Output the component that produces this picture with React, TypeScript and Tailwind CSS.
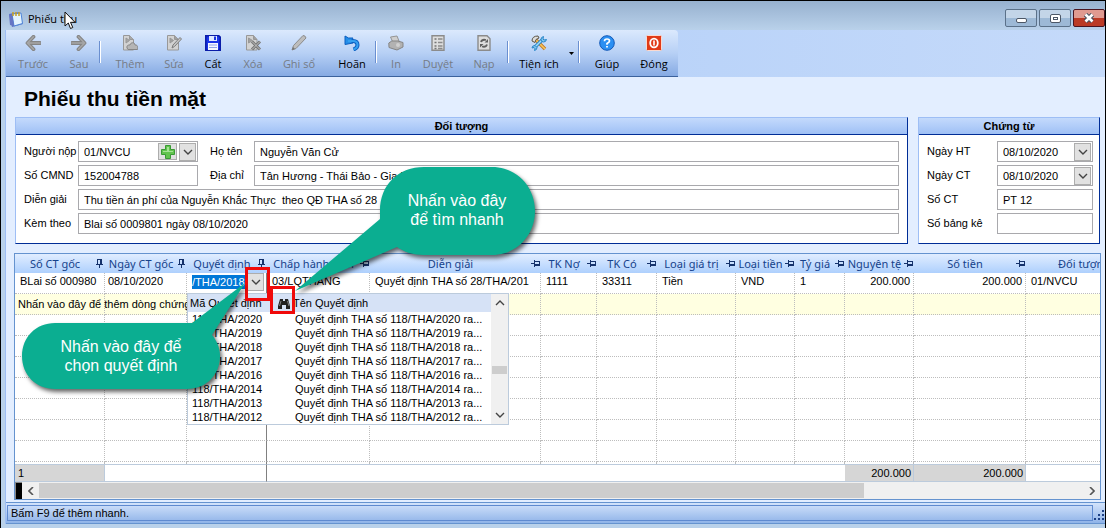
import type { ReactNode } from 'react'

const GRAY = '#858585'

function Icon({ children }: { children: ReactNode }) {
  return (
    <svg viewBox="0 0 16 16" className="h-4 w-4" aria-hidden="true">
      {children}
    </svg>
  )
}

const icons = {
  prev: (
    <Icon>
      <path d="M8.500 1.800 2.500 8l6 6.200M3 8h12" fill="none" stroke={GRAY} strokeWidth="3.800" strokeLinecap="round" strokeLinejoin="round" />
      <path d="M8.500 1.800 2.500 8l6 6.200M3 8h12" fill="none" stroke="#a6a6a6" strokeWidth="1.600" strokeLinecap="round" />
    </Icon>
  ),
  next: (
    <Icon>
      <path d="m7.500 1.800 6 6.200-6 6.200M13 8H1" fill="none" stroke={GRAY} strokeWidth="3.800" strokeLinecap="round" strokeLinejoin="round" />
      <path d="m7.500 1.800 6 6.200-6 6.200M13 8H1" fill="none" stroke="#a6a6a6" strokeWidth="1.600" strokeLinecap="round" />
    </Icon>
  ),
  add: (
    <Icon>
      <path d="M1.500 .5h6l4 4v10.500h-10z" fill="#d2d2d2" stroke="#989898" />
      <path d="M4 3v5l3.500-2.500zM7.500 .5v4h4" fill="#a8a8a8" stroke="#989898" />
      <path d="M5 13c-.5-3 1.500-3 3-3 .5-3 5-3 5 0 2.500 0 3 1 2.500 4.500H6z" fill="#b5b5b5" stroke="#858585" />
    </Icon>
  ),
  edit: (
    <Icon>
      <path d="M1.500 .5h7l4 4v10.500h-11z" fill="#d2d2d2" stroke="#989898" />
      <path d="M4 3v5l3.500-2.500zM8.500 .5v4h4" fill="#a0a0a0" stroke="#989898" />
      <path d="M6 13 7 10l7-7.500 1.500 1.500-7 7.500z" fill="#c6c6c6" stroke="#7c7c7c" />
    </Icon>
  ),
  save: (
    <Icon>
      <path d="M.8 .8h13l1.400 1.400v13H.8z" fill="#1a35e8" stroke="#0a1ca8" strokeWidth="1.600" />
      <path d="M4 1h8v5H4z" fill="#dfe9ff" />
      <path d="M9 1.500h2v3.500H9z" fill="#1a35e0" />
      <path d="M3 8h10v7H3z" fill="#f5f8ff" />
      <path d="M4 10h8M4 12.500h8" stroke="#90a4e8" />
    </Icon>
  ),
  remove: (
    <Icon>
      <path d="M1.500 .5h7l3.500 4v10.500H1.500z" fill="#d2d2d2" stroke="#989898" />
      <path d="M3.500 3v5l4-2.500zM8.500 .5v4h3.500" fill="#a0a0a0" stroke="#989898" />
      <path d="m7 6.500 8 8m0-8-8 8" stroke="#757575" strokeWidth="3" />
      <path d="m7 6.500 8 8m0-8-8 8" stroke="#c3c3c3" strokeWidth="1" />
    </Icon>
  ),
  post: (
    <Icon>
      <path d="m1 15 1.500-4.500 9.500-10q2.500 0 3 2.500l-10 10.500z" fill="#bdbdbd" stroke="#8b8b8b" />
      <path d="m1 15 1-3 2 2z" fill="#757575" />
    </Icon>
  ),
  undo: (
    <Icon>
      <path d="M5 6h4q4.500 0 4.500 4 0 3-4 4.500" fill="none" stroke="#0c5fc0" strokeWidth="4" />
      <path d="M1 1v8.500l8-1.500-2-1.500 2-3.500-4.500 0z" fill="#258ee8" stroke="#0c5fc0" />
      <path d="M4 6h5q4.500 0 4.500 4 0 3-4 4.500" fill="none" stroke="#35a0f0" strokeWidth="2" />
    </Icon>
  ),
  print: (
    <Icon>
      <path d="m2.500 2 6.500-1 2 5-6 1.500z" fill="#cecece" stroke="#959595" />
      <path d="m.8 8 3-2 6 0 5.200 1.500v4.500l-6 3-8-2.500z" fill="#b2b2b2" stroke="#858585" />
      <circle cx="10" cy="10" r="2" fill="#d0d0d0" />
    </Icon>
  ),
  approve: (
    <Icon>
      <path d="M2 .7h12v14.600H2z" fill="#dedede" stroke="#8b8b8b" strokeWidth="1.400" />
      <path d="M4.500 4h2m-2 3.500h2m-2 3.500h2m-2 2.500h2" stroke="#757575" strokeWidth="1.500" />
      <path d="M8 4h4.500M8 7.500h4.500M8 11h4.500M8 13.500h4.500" stroke="#8b8b8b" strokeWidth="1.300" />
    </Icon>
  ),
  reload: (
    <Icon>
      <path d="M2 .7h9l3 3v11.600H2z" fill="#dedede" stroke="#8b8b8b" strokeWidth="1.400" />
      <path d="M5 7q1-3 5-2M11 9.500q-1 3-5 2" fill="none" stroke="#606060" strokeWidth="1.800" />
      <path d="M8.500 7.500H12V4zM7.500 9H4v3.500z" fill="#606060" />
    </Icon>
  ),
  tools: (
    <Icon>
      <path d="m5 5 9 9" stroke="#c47a20" strokeWidth="3.400" />
      <path d="m5 5 9 9" stroke="#f8c860" strokeWidth="1.600" />
      <path d="M1 6q0-5 6-5l1 2-3 1.500-1 3z" fill="#ddd" stroke="#5c5548" />
      <path d="m3 13 8-8" stroke="#2b86c8" strokeWidth="3.400" />
      <path d="m3 13 8-8" stroke="#a6defa" strokeWidth="1.400" />
      <path d="M12.500 1.500Q10 2 10 4.500t2.500 2.500 3-2.500L13 5l-1-1z" fill="#7fc8f0" stroke="#2b86c8" />
      <path d="M4 10.500Q1 10.500 1 13l2-.5 1 1-.5 2q2.500-.5 2.500-3z" fill="#7fc8f0" stroke="#2b86c8" />
    </Icon>
  ),
  help: (
    <Icon>
      <circle cx="8" cy="8" r="7.300" fill="#2b8ff2" stroke="#1359b8" />
      <path d="M5.500 6.200Q5.500 4 8 4t2.500 2Q10.500 7.200 8 8.500v1.200" fill="none" stroke="#fff" strokeWidth="1.700" />
      <path d="M7.100 11h1.800v1.600H7.100z" fill="#fff" />
    </Icon>
  ),
  close: (
    <Icon>
      <rect x=".5" y=".5" width="15" height="15" rx="1" fill="#e03a18" stroke="#fbd9cf" />
      <ellipse cx="8" cy="8" rx="3.800" ry="4.300" fill="none" stroke="#fff" strokeWidth="1.800" />
      <path d="M8 5.500v5" stroke="#fff" strokeWidth="1.600" />
    </Icon>
  ),
}

type Tool = { label: string; icon: ReactNode; width: string; disabled?: boolean }

const groups: Tool[][] = [
  [
    { label: 'Trước', icon: icons.prev, width: 'w-[52px]', disabled: true },
    { label: 'Sau', icon: icons.next, width: 'w-10', disabled: true },
  ],
  [
    { label: 'Thêm', icon: icons.add, width: 'w-[58px]', disabled: true },
    { label: 'Sửa', icon: icons.edit, width: 'w-[30px]', disabled: true },
    { label: 'Cất', icon: icons.save, width: 'w-12' },
    { label: 'Xóa', icon: icons.remove, width: 'w-8', disabled: true },
    { label: 'Ghi sổ', icon: icons.post, width: 'w-[60px]', disabled: true },
    { label: 'Hoãn', icon: icons.undo, width: 'w-[46px]' },
  ],
  [
    { label: 'In', icon: icons.print, width: 'w-[38px]', disabled: true },
    { label: 'Duyệt', icon: icons.approve, width: 'w-[46px]', disabled: true },
    { label: 'Nạp', icon: icons.reload, width: 'w-[46px]', disabled: true },
  ],
  [{ label: 'Tiện ích', icon: icons.tools, width: 'w-[60px]' }],
  [
    { label: 'Giúp', icon: icons.help, width: 'w-[54px]' },
    { label: 'Đóng', icon: icons.close, width: 'w-10' },
  ],
]

function ToolButton({ label, icon, width, disabled }: Tool) {
  return (
    <button
      type="button"
      disabled={disabled}
      className={`${width} flex flex-col items-center gap-[5px] whitespace-nowrap pt-[5px] text-[11px] leading-4 disabled:text-[#757b85]`}
    >
      {icon}
      {label}
    </button>
  )
}

function Toolbar() {
  return (
    <div className="flex h-[47px] bg-linear-to-r from-[#a9c9f7] to-[#c5dafa]">
      <div className="flex rounded-tr-sm border-b border-[#3b619c] bg-linear-to-b from-[#dbe9fd] via-[#b7d0f5] to-[#86aae3] pl-px pr-1 font-['Open_Sans',sans-serif] text-black">
        {groups.map((group, i) => (
          <div key={group[0].label} className="flex">
            {i > 0 && <span className="mt-[11px] h-[22px] w-[2px] border-l border-r border-l-[#6a8fd0] border-r-white" />}
            {group.map((tool) => (
              <ToolButton key={tool.label} {...tool} />
            ))}
            {i === 3 && (
              <button type="button" aria-label="Mở tiện ích" className="flex w-[9px] items-center">
                <svg viewBox="0 0 5 3" className="h-[3px] w-[5px]">
                  <path d="M0 0h5L2.500 3z" />
                </svg>
              </button>
            )}
          </div>
        ))}
      </div>
    </div>
  )
}

function TitleBar() {
  return (
    <header className="flex h-[29px] items-end justify-between bg-linear-to-b from-[#97b1cf] to-[#b9d1ea] pl-[7px]">
      <div className="relative flex items-center gap-1 pb-[3px] font-['Open_Sans',sans-serif] text-[11px] leading-4">
        <svg viewBox="0 0 16 16" className="h-4 w-4" aria-hidden="true">
          <path d="m1 3 10-2 4 12-11 3z" fill="#5a6fc8" />
          <path d="m4 3 9-1 1.500 10.500L6 15z" fill="#e3f3ff" stroke="#4f86d8" />
          <path d="m1 4 3-1 2 12-4-1z" fill="#6675c4" />
          <path d="M5 1v4m3-4v4m3-4v4" stroke="#c8a020" strokeWidth="1.500" />
        </svg>
        <span>Phiếu thu</span>
        <svg viewBox="0 0 12 19" className="absolute left-[56px] top-0 h-[19px] w-3" aria-hidden="true">
          <path d="M1 1v14l3.300-3 2.200 5.500 2.300-1L6.500 11.300H11z" fill="#fff" stroke="#111" />
        </svg>
      </div>
      <div className="flex gap-[2px] pb-[3px]">
        <button
          type="button"
          aria-label="Thu nhỏ"
          className="flex h-[18px] w-8 items-center justify-center rounded-xs border border-[#5b7189] bg-linear-to-b from-[#c3d5e8] from-50% to-[#9db9d6] to-50% pt-1"
        >
          <span className="h-[5px] w-[11px] rounded-xs border border-[#4c5766] bg-white" />
        </button>
        <button
          type="button"
          aria-label="Phóng to"
          className="flex h-[18px] w-8 items-center justify-center rounded-xs border border-[#5b7189] bg-linear-to-b from-[#c3d5e8] from-50% to-[#9db9d6] to-50%"
        >
          <span className="flex h-[9px] w-[11px] items-center justify-center rounded-xs border border-[#4c5766] bg-white">
            <span className="h-[3px] w-[5px] border border-[#4c5766]" />
          </span>
        </button>
        <button
          type="button"
          aria-label="Đóng cửa sổ"
          className="flex h-[18px] w-8 items-center justify-center rounded-xs border border-[#4a1420] bg-linear-to-b from-[#e09a90] from-50% to-[#bb3a25] to-50%"
        >
          <svg viewBox="0 0 12 10" className="h-[10px] w-3">
            <path d="m2.500 1.500 7 7m0-7-7 7" stroke="#44505e" strokeWidth="4.600" />
            <path d="m2.500 1.500 7 7m0-7-7 7" stroke="#fff" strokeWidth="2.600" />
          </svg>
        </button>
      </div>
    </header>
  )
}

function Chevron() {
  return (
    <svg viewBox="0 0 10 6" className="h-[6px] w-[10px]" aria-hidden="true">
      <path d="m1 1 4 4 4-4" fill="none" stroke="#444" strokeWidth="1.400" />
    </svg>
  )
}

function DropButton({ label }: { label: string }) {
  return (
    <button
      type="button"
      aria-label={label}
      className="flex h-[18px] w-[17px] shrink-0 items-center justify-center border border-[#adadad] bg-[#e1e1e1]"
    >
      <Chevron />
    </button>
  )
}

type FieldProps = {
  id: string
  label: string
  value?: string
  wide?: boolean
  second?: boolean
  children?: ReactNode
}

function Field({ id, label, value = '', wide, second, children }: FieldProps) {
  return (
    <>
      <label htmlFor={id} className={`${second ? 'pl-3' : ''} whitespace-nowrap pt-0.5 leading-4`}>
        {label}
      </label>
      <div
        className={`${wide ? 'col-span-3' : ''} flex h-[21px] items-center gap-[2px] border border-[#a9a9ad] bg-white pr-px`}
      >
        <input id={id} defaultValue={value} className="h-full w-full min-w-0 bg-transparent pl-[5px] outline-none" />
        {children}
      </div>
    </>
  )
}

function Panel({ title, className, children }: { title: string; className: string; children: ReactNode }) {
  return (
    <section
      className={`${className} border border-b-[#002d96] border-l-[#9ebef5] border-r-[#002d96] border-t-[#9ebef5] bg-white`}
    >
      <h2 className="h-[17px] border-b border-[#002d96] bg-linear-to-b from-[#c4dafc] to-[#9fc0f5] text-center font-bold leading-4">
        {title}
      </h2>
      {children}
    </section>
  )
}

function Forms() {
  return (
    <div className="flex gap-[10px] pl-[9px] pr-[5px]">
      <Panel title="Đối tượng" className="flex-1">
        <div className="grid grid-cols-[54px_120px_56px_1fr] gap-y-[3px] px-2 pb-[9px] pt-[6px]">
          <Field id="payer" label="Người nộp" value="01/NVCU">
            <button
              type="button"
              aria-label="Thêm người nộp"
              className="flex h-[17px] w-[19px] shrink-0 items-center justify-center border border-[#adadad] bg-[#e1e1e1]"
            >
              <svg viewBox="0 0 14 14" className="h-[14px] w-[14px] shrink-0">
                <path d="M4.500 .5h5v4h4v5h-4v4h-5v-4h-4v-5h4z" fill="#62c44e" stroke="#3a9a35" />
                <path d="M6 2h2v4h4v1H2V6h4z" fill="#a5e396" />
              </svg>
            </button>
            <DropButton label="Chọn người nộp" />
          </Field>
          <Field id="name" label="Họ tên" value="Nguyễn Văn Cử" second />
          <Field id="idcard" label="Số CMND" value="152004788" />
          <Field id="address" label="Địa chỉ" value="Tân Hương - Thái Bảo - Gia Bình" second />
          <Field id="reason" label="Diễn giải" value="Thu tiền án phí của Nguyễn Khắc Thực  theo QĐ THA số 28" wide />
          <Field id="attach" label="Kèm theo" value="Blai số 0009801 ngày 08/10/2020" wide />
        </div>
      </Panel>
      <Panel title="Chứng từ" className="w-[182px]">
        <div className="grid grid-cols-[70px_1fr] gap-y-[3px] pb-[9px] pl-2 pr-[6px] pt-[6px]">
          <Field id="dateHt" label="Ngày HT" value="08/10/2020">
            <DropButton label="Chọn ngày HT" />
          </Field>
          <Field id="dateCt" label="Ngày CT" value="08/10/2020">
            <DropButton label="Chọn ngày CT" />
          </Field>
          <Field id="numberCt" label="Số CT" value="PT 12" />
          <Field id="listNo" label="Số bảng kê" />
        </div>
      </Panel>
    </div>
  )
}

function Pin({ fixed }: { fixed: boolean }) {
  return (
    <svg viewBox="0 0 9 9" className="h-[9px] w-[9px] shrink-0" shapeRendering="crispEdges" aria-hidden="true">
      {fixed ? (
        <path d="M2.500 5V.5h4V5M5.500 1v4M1 5.500h7M4.500 6v3" fill="none" stroke="#15326b" />
      ) : (
        <path d="M4 2.500h4.500v4H4M4 5.500h4M3.500 1v7M0 4.500h3" fill="none" stroke="#15326b" />
      )}
    </svg>
  )
}

const columns = [
  { title: 'Số CT gốc', width: 'w-[90px]', value: 'BLai số 000980' },
  { title: 'Ngày CT gốc', width: 'w-[82px]', value: '08/10/2020' },
  { title: 'Quyết định', width: 'w-[80px]', value: '' },
  { title: 'Chấp hành viên', width: 'w-[103px]', value: '03/LQTHANG' },
  { title: 'Diễn giải', width: 'w-[171px]', value: 'Quyết định THA số 28/THA/201' },
  { title: 'TK Nợ', width: 'w-[56px]', value: '1111' },
  { title: 'TK Có', width: 'w-[60px]', value: '33311' },
  { title: 'Loại giá trị', width: 'w-[79px]', value: 'Tiền' },
  { title: 'Loại tiền', width: 'w-[59px]', value: 'VND' },
  { title: 'Tỷ giá', width: 'w-[50px]', value: '1' },
  { title: 'Nguyên tệ', width: 'w-[69px]', value: '200.000', total: '200.000' },
  { title: 'Số tiền', width: 'w-[112px]', value: '200.000', total: '200.000' },
  { title: 'Đối tượng', width: 'w-auto', value: '01/NVCU' },
]

const emptyRows = [1, 2, 3, 4, 5, 6, 7]

// the frozen columns end after "Quyết định"
function cellLine(i: number) {
  if (i === 2) return 'border-r border-r-[#808080]'
  if (i === 12) return ''
  return 'border-r border-r-[#bdbdbd] [border-right-style:dotted]'
}

function DetailTable() {
  return (
    <table className="w-full table-fixed border-separate border-spacing-0">
      <thead>
        <tr className="h-[19px] bg-linear-to-b from-[#e1edff] to-[#aed0fd] font-['Noto_Sans',sans-serif] text-[11px] leading-4 text-[#15428b]">
          {columns.map((col, i) => (
            <th key={col.title} className={`${col.width} overflow-hidden p-0 font-normal`}>
              {i === 12 ? (
                <div className="whitespace-nowrap pl-8 text-left">{col.title}</div>
              ) : (
                <div className="flex items-center pr-px">
                  <span className="flex-1 whitespace-nowrap text-center">{col.title}</span>
                  <Pin fixed={i < 3} />
                </div>
              )}
            </th>
          ))}
        </tr>
      </thead>
      <tbody>
        <tr className="h-[21px] align-top">
          {columns.map((col, i) => (
            <td
              key={col.title}
              className={`${cellLine(i)} ${col.total ? 'pr-[3px] text-right' : i === 1 ? 'pl-[3px]' : 'pl-[5px]'} overflow-hidden whitespace-nowrap border-b border-b-[#bdbdbd] py-0 leading-4 [border-bottom-style:dotted]`}
            >
              {i === 2 ? (
                <div className="flex items-center">
                  <input
                    aria-label="Quyết định"
                    defaultValue="/THA/2018"
                    className="h-[14px] w-[55px] bg-[#0078d7] text-white outline-none"
                  />
                  <DropButton label="Chọn quyết định" />
                </div>
              ) : (
                col.value
              )}
            </td>
          ))}
        </tr>
        <tr className="h-[21px] bg-[#ffffe1]">
          {columns.map((col, i) => (
            <td
              key={col.title}
              className={`${cellLine(i)} whitespace-nowrap border-b border-b-[#bdbdbd] py-0 pl-[3px] leading-4 [border-bottom-style:dotted]`}
            >
              {i === 0 && 'Nhấn vào đây để thêm dòng chứng'}
            </td>
          ))}
        </tr>
        {emptyRows.map((row) => (
          <tr key={row} className="h-[21px]">
            {columns.map((col, i) => (
              <td
                key={col.title}
                className={`${cellLine(i)} border-b border-b-[#bdbdbd] p-0 [border-bottom-style:dotted]`}
              />
            ))}
          </tr>
        ))}
        <tr className="h-[2px]">
          {columns.map((col, i) => (
            <td key={col.title} className={`${cellLine(i)} p-0`} />
          ))}
        </tr>
      </tbody>
      <tfoot>
        <tr className="h-[18px]">
          {columns.map((col, i) => (
            <td
              key={col.title}
              className={`${i === 2 ? 'border-r border-r-[#808080]' : ''} ${i === 0 || col.total ? 'border-r border-r-[#bccbdc] bg-[#d6d6d6]' : ''} ${i === 0 ? 'pl-[3px]' : 'pr-[2px] text-right'} border-b border-t border-b-[#bccbdc] border-t-[#bccbdc] py-0 leading-[14px]`}
            >
              {i === 0 ? '1' : col.total}
            </td>
          ))}
        </tr>
      </tfoot>
    </table>
  )
}

const years = [2020, 2019, 2018, 2017, 2016, 2014, 2013, 2012]

function DecisionList() {
  return (
    <div className="absolute left-[172px] top-[39px] flex w-[322px] border border-[#bccbdc] bg-white">
      <div className="min-w-0 flex-1">
        <table className="w-full table-fixed border-separate border-spacing-0 text-left">
          <thead>
            <tr className="h-[18px] bg-[#d6e2f6]">
              <th className="w-[105px] whitespace-nowrap py-0 pl-[2px] font-normal leading-4">
                <span className="flex items-center justify-between pr-[3px]">
                  Mã Quyết định
                  <svg viewBox="0 0 12 11" className="h-[11px] w-3" aria-hidden="true">
                    <path d="M2 1h3v2h2V1h3l2 7v3H8V7H4v4H0V8z" fill="#222" />
                    <path d="m3 3-1.500 5m8-5L11 8" stroke="#999" strokeWidth=".8" />
                  </svg>
                </span>
              </th>
              <th className="whitespace-nowrap p-0 font-normal leading-4">Tên Quyết định</th>
            </tr>
          </thead>
          <tbody>
            {years.map((year) => (
              <tr key={year} className="h-[14px] leading-[14px]">
                <td className="py-0 pl-1">118/THA/{year}</td>
                <td className="whitespace-nowrap py-0 pl-[2px]">Quyết định THA số 118/THA/{year} ra...</td>
              </tr>
            ))}
          </tbody>
        </table>
      </div>
      <div className="flex w-[17px] flex-col items-center bg-[#f0f0f0] py-[6px]">
        <span className="rotate-180">
          <Chevron />
        </span>
        <span className="mt-[60px] h-2 w-[15px] bg-[#cdcdcd]" />
        <span className="mt-auto">
          <Chevron />
        </span>
      </div>
    </div>
  )
}

function HorizontalScroll() {
  return (
    <div className="flex h-[17px] items-center bg-[#f0f0f0]">
      <span className="h-full w-[7px] border-l border-t border-[#888] bg-black" />
      <span className="flex w-[17px] justify-center">
        <svg viewBox="0 0 6 8" className="h-2 w-[6px]">
          <path d="M5 0 1 4l4 4" fill="none" stroke="#555" strokeWidth="1.600" />
        </svg>
      </span>
      <span className="flex h-full flex-1 py-px">
        <span className="w-[79%] bg-[#cdcdcd]" />
      </span>
      <span className="flex w-[17px] justify-center">
        <svg viewBox="0 0 6 8" className="h-2 w-[6px]">
          <path d="m1 0 4 4-4 4" fill="none" stroke="#555" strokeWidth="1.600" />
        </svg>
      </span>
    </div>
  )
}

function Callouts() {
  return (
    <div className="pointer-events-none font-['Liberation_Sans',sans-serif] text-[16px] leading-[19px] text-white">
      <div className="absolute left-[231px] top-[14px] h-[34px] w-[25px] border-3 border-[#f00a0a]" />
      <div className="absolute left-[256px] top-[33px] h-[28px] w-[25px] border-3 border-[#f00a0a]" />
      <div className="absolute left-[281px] top-[-86px] h-[124px] w-[240px] pl-[84px]">
        <svg viewBox="0 0 240 124" className="absolute left-0 top-0 h-[124px] w-[240px] overflow-visible drop-shadow-[2px_3px_2px_rgba(0,0,0,0.6)]">
          <path
            d="M0 124 85 52V44C85 17 104 0 129 0H197C222 0 240 20 240 44S222 88 197 88H129C118 88 109 85 102 80Z"
            fill="#0bae91"
          />
        </svg>
        <p className="relative pt-[24px] text-center">
          Nhấn vào đây
          <br />
          để tìm nhanh
        </p>
      </div>
      <div className="absolute left-2 top-[30px] h-[106px] w-[224px] pr-[26px]">
        <svg viewBox="0 0 224 106" className="absolute left-0 top-0 h-[106px] w-[224px] overflow-visible drop-shadow-[2px_3px_2px_rgba(0,0,0,0.6)]">
          <path d="M223 0 190 52C195 58 198 65 198 73 198 92 184 106 165 106H33C14 106 0 92 0 73S14 40 33 40H170Z" fill="#0bae91" />
        </svg>
        <p className="relative pt-[54px] text-center">
          Nhấn vào đây để
          <br />
          chọn quyết định
        </p>
      </div>
    </div>
  )
}

export default function App() {
  return (
    <div className="flex min-h-screen flex-col border border-black bg-[#b9d1ea] font-['Liberation_Sans',Arial,sans-serif] text-[11px] text-black">
      <TitleBar />
      <div className="ml-1 flex flex-1 flex-col border-l border-[#9ebef5] bg-[#e3eeff]">
        <Toolbar />
        <h1 className="pb-[6px] pl-[18px] pt-[10px] text-[21px] font-bold leading-6">Phiếu thu tiền mặt</h1>
        <Forms />
        <div className="relative ml-2 mr-1 mt-[9px]">
          <div className="relative overflow-hidden border border-[#6593cf] bg-white">
            <DetailTable />
            <DecisionList />
            <HorizontalScroll />
          </div>
          <Callouts />
        </div>
        <footer className="mt-[2px] flex items-end border-y border-[#6593cf] bg-linear-to-b from-[#d3e3fb] to-[#8fb3e8] py-[2px] pl-px">
          <p className="flex-1 border border-[#5f8ad0] px-[3px] leading-[14px]">Bấm F9 để thêm nhanh.</p>
          <svg viewBox="0 0 12 12" className="h-3 w-3" aria-hidden="true">
            <path d="M9 1h2v2H9zM5 5h2v2H5zm4 0h2v2H9zM1 9h2v2H1zm4 0h2v2H5zm4 0h2v2H9z" fill="#1c3f85" />
          </svg>
        </footer>
      </div>
      <div className="h-1" />
    </div>
  )
}
